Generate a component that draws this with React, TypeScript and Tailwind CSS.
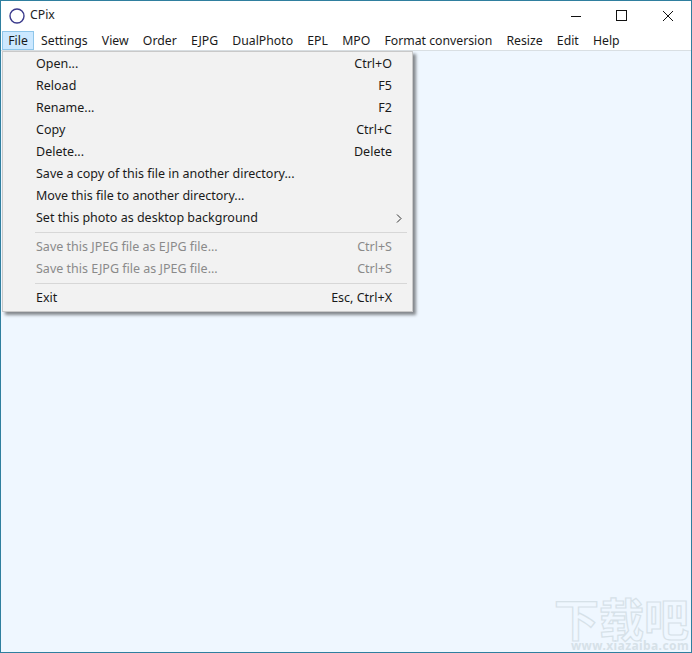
const font = { fontFamily: '"Noto Sans", "Open Sans", sans-serif' };

const menuBar = ["Settings", "View", "Order", "EJPG", "DualPhoto", "EPL", "MPO", "Format conversion", "Resize", "Edit", "Help"];

const Item = ({ label, keys, disabled, arrow }: { label: string; keys?: string; disabled?: boolean; arrow?: boolean }) => (
  <div className={`flex h-[22px] items-center justify-between pl-[33px] pr-[20px] ${disabled ? "text-[#8a8a8a]" : "text-[#1a1a1a]"}`}>
    <span>{label}</span>
    {keys && <span>{keys}</span>}
    {arrow && (
      <svg width="6" height="9" viewBox="0 0 6 9" className="mr-[-10px]" fill="none" stroke="#333" strokeWidth="1">
        <path d="M1 0.5 L5 4.5 L1 8.5" />
      </svg>
    )}
  </div>
);

const Separator = () => <div className="my-[3px] ml-[32px] mr-[5px] h-px bg-[#d7d7d7]" />;

export default function App() {
  return (
    <div className="relative flex h-[653px] w-[692px] flex-col overflow-hidden border border-[#2f7f9f] bg-white text-[12.25px] text-[#1a1a1a]" style={font}>
      <div className="flex h-[29px] items-center">
        <svg width="18" height="18" viewBox="0 0 18 18" className="ml-[7px]" fill="none">
          <circle cx="9" cy="9" r="7" stroke="#3a3a8c" strokeWidth="1.4" />
        </svg>
        <span className="ml-[4px] text-[#222]">CPix</span>
        <div className="ml-auto flex items-center">
          <svg width="12" height="12" viewBox="0 0 12 12" className="mr-[34px]" stroke="#111" fill="none">
            <path d="M1 6.5 H11" />
          </svg>
          <svg width="11" height="11" viewBox="0 0 11 11" className="mr-[35px]" stroke="#111" fill="none">
            <rect x="0.5" y="0.5" width="10" height="10" />
          </svg>
          <svg width="12" height="12" viewBox="0 0 12 12" className="mr-[17px]" stroke="#111" fill="none">
            <path d="M1 1 L11 11 M11 1 L1 11" />
          </svg>
        </div>
      </div>

      <div className="flex h-[21px] items-center border-b border-[#d9dfe3]">
        <div className="ml-[1px] mt-[1px] flex h-[19px] w-[32px] items-center justify-center border border-[#8fc6ea] bg-[#cce8ff] pt-px">File</div>
        <div className="ml-[7px] flex gap-[14.2px] pt-[3px]">
          {menuBar.map((m) => (
            <span key={m}>{m}</span>
          ))}
        </div>
      </div>

      <div className="relative flex-1 bg-[#eff7ff]">
        <div className="absolute left-px top-0 w-[411px] border border-[#c9c9c9] bg-[#f2f2f2] pb-[2px] pt-[1px] text-[12.5px] shadow-[3px_3px_3px_rgba(0,0,0,0.45)]">
          <Item label="Open..." keys="Ctrl+O" />
          <Item label="Reload" keys="F5" />
          <Item label="Rename..." keys="F2" />
          <Item label="Copy" keys="Ctrl+C" />
          <Item label="Delete..." keys="Delete" />
          <Item label="Save a copy of this file in another directory..." />
          <Item label="Move this file to another directory..." />
          <Item label="Set this photo as desktop background" arrow />
          <Separator />
          <Item label="Save this JPEG file as EJPG file..." keys="Ctrl+S" disabled />
          <Item label="Save this EJPG file as JPEG file..." keys="Ctrl+S" disabled />
          <Separator />
          <Item label="Exit" keys="Esc, Ctrl+X" />
        </div>

        <div className="absolute bottom-0 right-[2px] flex flex-col items-end leading-none">
          <span
            className="text-[45px] font-bold leading-[44px] text-transparent [-webkit-text-stroke:1.2px_#d6e1e8]"
            style={{ fontFamily: '"Noto Sans CJK SC", sans-serif' }}
          >
            下载吧
          </span>
          <span className="text-[12px] font-bold leading-[12px] tracking-[0.4px] text-[#d6e1e8]">www.xiazaiba.com</span>
        </div>
      </div>
    </div>
  );
}
